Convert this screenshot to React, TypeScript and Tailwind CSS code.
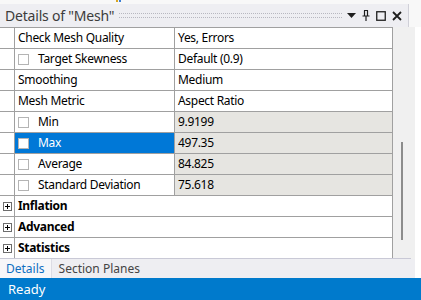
import React from "react";

type Row =
  | { kind: "prop"; label: string; value: string; check?: boolean; readonly?: boolean; selected?: boolean }
  | { kind: "group"; label: string };

const rows: Row[] = [
  { kind: "prop", label: "Check Mesh Quality", value: "Yes, Errors" },
  { kind: "prop", label: "Target Skewness", value: "Default (0.9)", check: true },
  { kind: "prop", label: "Smoothing", value: "Medium" },
  { kind: "prop", label: "Mesh Metric", value: "Aspect Ratio" },
  { kind: "prop", label: "Min", value: "9.9199", check: true, readonly: true },
  { kind: "prop", label: "Max", value: "497.35", check: true, readonly: true, selected: true },
  { kind: "prop", label: "Average", value: "84.825", check: true, readonly: true },
  { kind: "prop", label: "Standard Deviation", value: "75.618", check: true, readonly: true },
  { kind: "group", label: "Inflation" },
  { kind: "group", label: "Advanced" },
  { kind: "group", label: "Statistics" },
];

function Expander() {
  return (
    <svg width="9" height="9" viewBox="0 0 9 9" className="shrink-0">
      <rect x="0.5" y="0.5" width="8" height="8" fill="#fff" stroke="#6d6d6d" />
      <path d="M2 4.5h5M4.5 2v5" stroke="#000" strokeWidth="1" />
    </svg>
  );
}

function CheckBox() {
  return <div className="w-[11px] h-[11px] shrink-0 bg-white border border-[#b4b4b4]" />;
}

function PropRow({ row }: { row: Row }) {
  if (row.kind === "group") {
    return (
      <div className="flex h-[21px] border-b border-[#a0a0a0]">
        <div className="w-[14px] flex items-center justify-center pl-[1px] bg-white">
          <Expander />
        </div>
        <div className="flex-1 flex items-center pl-[3px] border-l border-[#a0a0a0] border-r font-bold text-black">
          {row.label}
        </div>
      </div>
    );
  }
  return (
    <div className="flex h-[21px] border-b border-[#a0a0a0]">
      <div className="w-[14px] bg-white" />
      <div
        className={`w-[161px] flex items-center border-l border-r border-[#a0a0a0] ${
          row.selected ? "bg-[#0078d7] text-white" : "bg-white text-black"
        }`}
      >
        {row.check ? (
          <div className="flex items-center pl-[3px] gap-[9px]">
            <CheckBox />
            <span>{row.label}</span>
          </div>
        ) : (
          <span className="pl-[3px]">{row.label}</span>
        )}
      </div>
      <div
        className={`flex-1 flex items-center pl-[3px] border-r border-[#a0a0a0] text-black ${
          row.readonly ? "bg-[#e6e5e1]" : "bg-white"
        }`}
      >
        {row.value}
      </div>
    </div>
  );
}

export default function App() {
  return (
    <div className="w-[421px] h-[300px] bg-white overflow-hidden flex flex-col text-[12px] font-['Noto_Sans','Liberation_Sans',sans-serif] leading-none">
      {/* toolbar remnant */}
      <div className="h-[4px] bg-[#f8f8f8] relative">
        <div className="absolute left-[116px] top-0 w-[2px] h-[2px] bg-[#d9a520]" />
        <div className="absolute left-[119px] top-0 w-[2px] h-[2px] bg-[#3b7fd6]" />
      </div>

      {/* panel header */}
      <div className="flex">
        <div className="w-[409px] h-[23px] bg-[#eeeef2] border-r border-[#d0d0d8] flex items-center pl-[5px] pr-[6px]">
          <span className="text-[14px] text-[#3c3c3c] tracking-[-0.2px]">Details of "Mesh"</span>
          <div className="flex-1 mx-[5px] h-[5px] border-y border-dotted border-[#b8b8c0]" />
          <div className="flex items-center gap-[6px]">
            <svg width="9" height="5" viewBox="0 0 9 5">
              <path d="M0 0h9L4.5 5z" fill="#1e1e1e" />
            </svg>
            <svg width="8" height="11" viewBox="0 0 8 11">
              <path d="M2 0.5h4M2.5 0.5v5M5.5 0.5v5M0.5 6h7M4 6v5" stroke="#1e1e1e" strokeWidth="1.2" fill="none" />
            </svg>
            <svg width="10" height="10" viewBox="0 0 10 10">
              <rect x="0.75" y="0.75" width="8.5" height="8.5" fill="none" stroke="#1e1e1e" strokeWidth="1.3" />
            </svg>
            <svg width="10" height="10" viewBox="0 0 10 10">
              <path d="M1 1l8 8M9 1l-8 8" stroke="#1e1e1e" strokeWidth="1.8" />
            </svg>
          </div>
        </div>
        <div className="flex-1 bg-[#f8f8f8]" />
      </div>

      {/* grid + scrollbar */}
      <div className="flex">
        <div className="w-[411px] border-b border-[#c9c9d6] flex">
          <div className="w-[393px] h-[231px] overflow-hidden border-t border-[#a0a0a0] tracking-[-0.3px]">
            {rows.map((r, i) => (
              <PropRow key={i} row={r} />
            ))}
          </div>
          <div className="w-[18px] h-[231px] bg-[#f0f0f0] relative">
            <div className="absolute left-[8px] top-[115px] w-[2px] h-[98px] bg-[#8c8c8c]" />
          </div>
        </div>
        <div className="w-[4px] bg-[#f0f0f0]" />
        <div className="flex-1 bg-white" />
      </div>

      {/* tabs */}
      <div className="h-[19px] flex bg-[#eeeef2] text-[12px]">
        <div className="w-[415px] flex items-stretch">
          <div className="px-[6px] flex items-center bg-[#f7f7f9] text-[#0e6fc1] border-r border-[#dcdce4]">Details</div>
          <div className="px-[7px] flex items-center text-[#444]">Section Planes</div>
        </div>
        <div className="flex-1 bg-white" />
      </div>

      {/* status bar */}
      <div className="flex-1 bg-[#007acc] flex items-center pl-[8px] text-white text-[13px]">Ready</div>
    </div>
  );
}
